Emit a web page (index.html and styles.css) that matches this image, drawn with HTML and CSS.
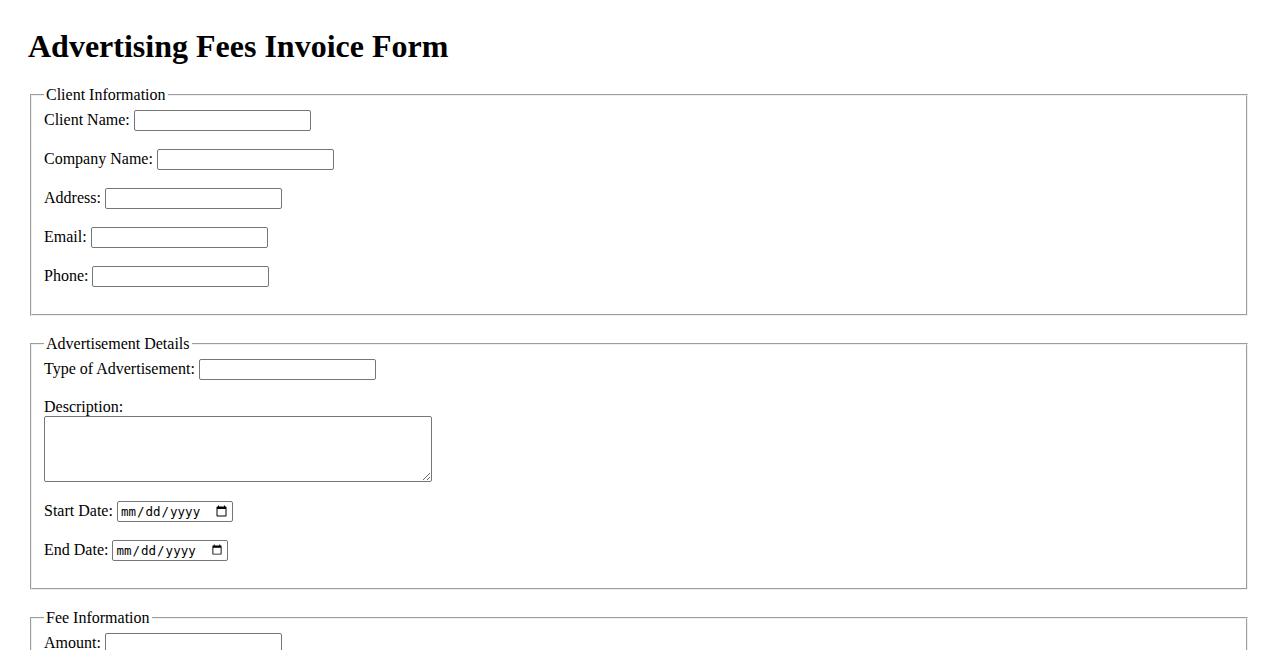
FILE: index.html
```html
<!DOCTYPE html>
<html lang="en">
<head>
<meta charset="utf-8">
<title>Advertising Fees Invoice Form</title>
<link rel="stylesheet" href="styles.css">
</head>
<body class="page">
<h1 class="title">Advertising Fees Invoice Form</h1>
<form class="invoice">
  <fieldset class="group">
    <legend class="group-title">Client Information</legend>
    <label for="clientName">Client Name:</label>
    <input class="field" type="text" id="clientName"><br><br>
    <label for="companyName">Company Name:</label>
    <input class="field" type="text" id="companyName"><br><br>
    <label for="address">Address:</label>
    <input class="field" type="text" id="address"><br><br>
    <label for="email">Email:</label>
    <input class="field" type="email" id="email"><br><br>
    <label for="phone">Phone:</label>
    <input class="field" type="tel" id="phone"><br><br>
  </fieldset>
  <fieldset class="group">
    <legend class="group-title">Advertisement Details</legend>
    <label for="adType">Type of Advertisement:</label>
    <input class="field" type="text" id="adType"><br><br>
    <label for="description">Description:</label><br>
    <textarea class="area" id="description"></textarea><br><br>
    <label for="startDate">Start Date:</label>
    <input class="date" type="date" id="startDate"><br><br>
    <label for="endDate">End Date:</label>
    <input class="date" type="date" id="endDate"><br><br>
  </fieldset>
  <fieldset class="group">
    <legend class="group-title">Fee Information</legend>
    <label for="amount">Amount:</label>
    <input class="field" type="number" id="amount"><br><br>
    <label for="tax">Tax:</label>
    <input class="field" type="number" id="tax"><br><br>
    <label for="total">Total:</label>
    <input class="field" type="number" id="total"><br><br>
  </fieldset>
</form>
</body>
</html>
```
FILE: styles.css
```css
html {
  background: #ffffff;
}
.page {
  margin: 8px;
  padding: 20px;
  font-family: "Liberation Serif", "Times New Roman", serif;
  font-size: 16px;
  color: #000000;
}
.title {
  font-size: 32px;
  font-weight: bold;
  margin: 0 0 21px;
}
.group {
  margin: 0 2px 19.5px;
  padding: 0.35em 0.75em 9px;
  border: 2px groove #f0f0f0;
}
.group-title {
  padding: 0 2px;
}
.field {
  box-sizing: border-box;
  width: 177px;
  height: 21px;
  padding: 1px 2px;
  border: 1px solid #767676;
  border-radius: 2px;
  font-family: "Liberation Sans", Arial, sans-serif;
  font-size: 13.33px;
  vertical-align: baseline;
}
.area {
  box-sizing: border-box;
  width: 388px;
  height: 66px;
  padding: 2px;
  border: 1px solid #767676;
  border-radius: 2px;
  font-family: "Liberation Mono", monospace;
  font-size: 13.33px;
  vertical-align: text-bottom;
}
.date {
  box-sizing: border-box;
  width: 116px;
  height: 21px;
  padding: 1px 2px;
  border: 1px solid #767676;
  border-radius: 2px;
  font-family: "DejaVu Sans Mono", "Liberation Mono", monospace;
  font-size: 12.5px;
}
```
